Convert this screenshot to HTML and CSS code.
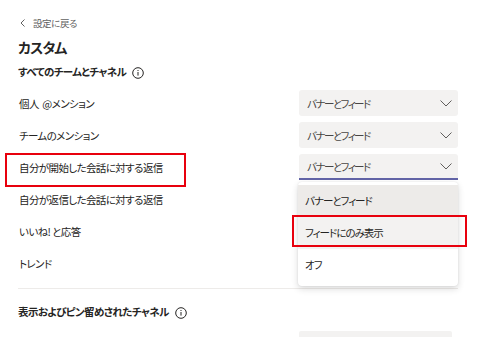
FILE: index.html
```html
<!DOCTYPE html>
<html lang="ja">
  <head>
    <meta charset="UTF-8" />
    <meta name="viewport" content="width=device-width, initial-scale=1.0" />
    <title>カスタム</title>
    <link rel="stylesheet" href="styles.css">
  </head>
  <body>
    <main class="page">
      <div class="back">
        <svg width="5" height="8" viewBox="0 0 5 8"><path d="M4.5 0.5 L1 4 L4.5 7.5" fill="none" stroke="#616161" stroke-width="1"/></svg>
        <span>設定に戻る</span>
      </div>
      <h1>カスタム</h1>

      <h2>
        すべてのチームとチャネル
        <svg class="info" width="12" height="12" viewBox="0 0 12 12"><circle cx="6" cy="6" r="5.3" fill="none" stroke="#252423" stroke-width="1"/><rect x="5.5" y="5" width="1" height="3.6" fill="#252423"/><rect x="5.5" y="3" width="1" height="1" fill="#252423"/></svg>
      </h2>

      <div class="rows">
        <div class="row">
          <span class="label">個人&nbsp;&nbsp;@メンション</span>
          <div class="select">
            <span>バナーとフィード</span>
            <svg width="12" height="7" viewBox="0 0 12 7"><path d="M0.5 0.5 L6 6 L11.5 0.5" fill="none" stroke="#605e5c" stroke-width="1"/></svg>
          </div>
        </div>
        <div class="row">
          <span class="label">チームのメンション</span>
          <div class="select">
            <span>バナーとフィード</span>
            <svg width="12" height="7" viewBox="0 0 12 7"><path d="M0.5 0.5 L6 6 L11.5 0.5" fill="none" stroke="#605e5c" stroke-width="1"/></svg>
          </div>
        </div>
        <div class="row">
          <span class="label">自分が開始した会話に対する返信</span>
          <span class="mark mark-label"></span>
          <div class="select open">
            <span>バナーとフィード</span>
            <svg width="12" height="7" viewBox="0 0 12 7"><path d="M0.5 0.5 L6 6 L11.5 0.5" fill="none" stroke="#605e5c" stroke-width="1"/></svg>
            <ul class="menu">
              <li class="selected">バナーとフィード</li>
              <li class="hover">フィードにのみ表示</li>
              <li>オフ</li>
              <span class="mark mark-item"></span>
            </ul>
          </div>
        </div>
        <div class="row">
          <span class="label">自分が返信した会話に対する返信</span>
        </div>
        <div class="row">
          <span class="label">いいね! と応答</span>
        </div>
        <div class="row">
          <span class="label">トレンド</span>
        </div>
      </div>

      <hr class="divider" />

      <h2>
        表示およびピン留めされたチャネル
        <svg class="info" width="12" height="12" viewBox="0 0 12 12"><circle cx="6" cy="6" r="5.3" fill="none" stroke="#252423" stroke-width="1"/><rect x="5.5" y="5" width="1" height="3.6" fill="#252423"/><rect x="5.5" y="3" width="1" height="1" fill="#252423"/></svg>
      </h2>
      <div class="row">
        <span class="label"></span>
        <div class="select blank"></div>
      </div>
    </main>
  </body>
</html>
```

FILE: styles.css
```css
html {
  overflow: hidden;
}
body {
  font-family: "Noto Sans CJK JP", "Noto Sans", sans-serif;
  font-feature-settings: "palt";
  margin: 0;
  padding: 0;
  background-color: #fff;
  color: #252423;
}
.page {
  padding: 16px 27px 0 18px;
}
.back {
  display: flex;
  align-items: center;
  gap: 8px;
  height: 14px;
  font-size: 9.5px;
  letter-spacing: -0.4px;
  color: #616161;
  padding-left: 2px;
}
h1 {
  margin: 7px 0 0 0;
  font-size: 14px;
  font-weight: 700;
  line-height: 20px;
  letter-spacing: -0.8px;
}
h2 {
  display: flex;
  align-items: center;
  gap: 6px;
  margin: 6px 0 0 0;
  font-size: 10.5px;
  font-weight: 700;
  line-height: 18px;
  letter-spacing: -0.6px;
}
.info {
  margin-top: 1px;
}
.rows {
  margin-top: 9px;
}
.row {
  position: relative;
  display: flex;
  align-items: center;
  justify-content: space-between;
  height: 26px;
  margin-bottom: 6px;
  font-size: 10.5px;
  letter-spacing: -0.6px;
}
.rows .row:last-child {
  margin-bottom: 0;
}
.label {
  padding-left: 1px;
}
.select {
  position: relative;
  box-sizing: border-box;
  display: flex;
  align-items: center;
  justify-content: space-between;
  width: 159px;
  height: 26px;
  padding: 0 6px 0 8px;
  background-color: #f3f2f1;
  border-radius: 3px;
  color: #484644;
  font-size: 10.5px;
  letter-spacing: -1.5px;
}
.select.open {
  border-bottom: 2px solid #6264a7;
  border-radius: 3px 3px 0 0;
  padding-top: 1px;
}
.select.blank {
  width: 153px;
  margin-right: 6px;
  border-radius: 2px;
}
.menu {
  position: absolute;
  top: 28px;
  left: -1px;
  z-index: 2;
  width: 160px;
  margin: 0;
  padding: 3px 0 5px 0;
  list-style: none;
  background-color: #fff;
  border-radius: 4px;
  box-shadow: 0 3px 7px rgba(0, 0, 0, 0.14), 0 0 2px rgba(0, 0, 0, 0.1);
}
.menu li {
  height: 32px;
  line-height: 32px;
  padding-left: 7px;
  color: #252423;
  font-size: 10.5px;
  letter-spacing: -1px;
}
.menu li.selected {
  background-color: #edebe9;
}
.menu li.hover {
  background-color: #f3f2f1;
}
.mark {
  position: absolute;
  border: 2px solid #e8000d;
  pointer-events: none;
}
.mark-label {
  left: -13px;
  top: -1px;
  width: 177px;
  height: 30px;
}
.mark-item {
  left: -6px;
  top: 33px;
  width: 171px;
  height: 28px;
}
.divider {
  margin: 12px 0 0 0;
  border: 0;
  border-top: 1px solid #edebe9;
}
.divider + h2 {
  margin-top: 14px;
}
.divider + h2 + .row {
  margin-top: 10px;
}
```
